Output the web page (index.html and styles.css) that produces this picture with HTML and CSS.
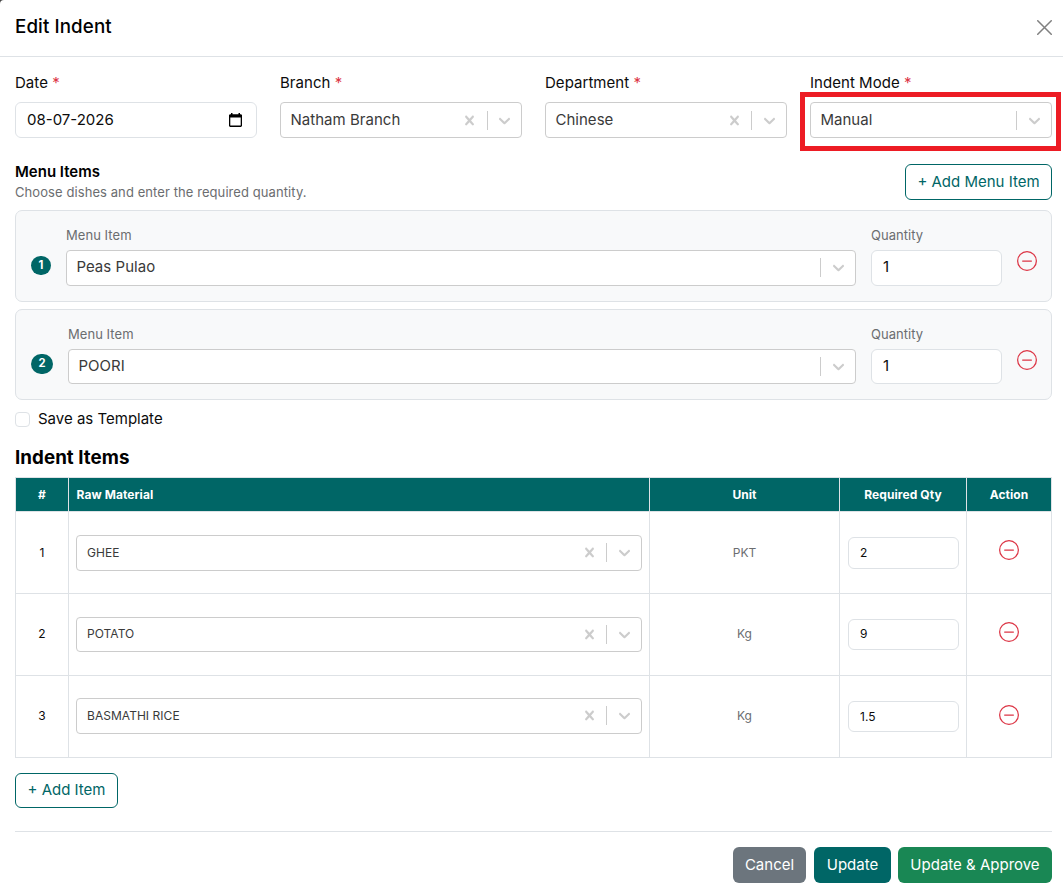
FILE: index.html
```
<!DOCTYPE html>
<html lang="en">
<head>
<meta charset="utf-8">
<title>Edit Indent</title>
<link rel="stylesheet" href="styles.css">
</head>
<body>
<svg class="sprite" aria-hidden="true">
  <symbol id="clear" viewBox="0 0 20 20"><path d="M14.348 14.849c-0.469 0.469-1.229 0.469-1.697 0l-2.651-3.030-2.651 3.029c-0.469 0.469-1.229 0.469-1.697 0-0.469-0.469-0.469-1.229 0-1.697l2.758-3.15-2.759-3.152c-0.469-0.469-0.469-1.228 0-1.697s1.228-0.469 1.697 0l2.652 3.031 2.651-3.031c0.469-0.469 1.228-0.469 1.697 0s0.469 1.229 0 1.697l-2.758 3.152 2.758 3.15c0.469 0.469 0.469 1.229 0 1.698z"/></symbol>
  <symbol id="chevron" viewBox="0 0 20 20"><path d="M4.516 7.548c0.436-0.446 1.043-0.481 1.576 0l3.908 3.747 3.908-3.747c0.533-0.481 1.141-0.446 1.574 0 0.436 0.445 0.408 1.197 0 1.615-0.406 0.418-4.695 4.502-4.695 4.502-0.217 0.223-0.502 0.335-0.787 0.335s-0.57-0.112-0.789-0.335c0 0-4.287-4.084-4.695-4.502s-0.436-1.17 0-1.615z"/></symbol>
  <symbol id="minus" viewBox="0 0 16 16"><path d="M8 15A7 7 0 1 1 8 1a7 7 0 0 1 0 14m0 1A8 8 0 1 0 8 0a8 8 0 0 0 0 16"/><path d="M4 8a.5.5 0 0 1 .5-.5h7a.5.5 0 0 1 0 1h-7A.5.5 0 0 1 4 8"/></symbol>
</svg>
<main class="modal">
  <header class="modal-header">
    <h1>Edit Indent</h1>
    <svg class="close" viewBox="0 0 16 16"><path d="M.8.8 15.2 15.2M15.2.8.8 15.2"/></svg>
  </header>

  <section class="filters">
    <div class="field">
      <label>Date <b>*</b></label>
      <div class="input date"><span>08-07-2026</span>
        <svg viewBox="0 0 13 14"><path d="M2 0h1.5v1.3h6V0H11v1.3h.7c.7 0 1.3.6 1.3 1.3v10c0 .7-.6 1.3-1.3 1.3H1.3C.6 13.900 0 13.300 0 12.600v-10c0-.7.6-1.300 1.300-1.300H2zM1.300 4.600v8h10.400v-8z"/></svg>
      </div>
    </div>
    <div class="field">
      <label>Branch <b>*</b></label>
      <div class="select branch"><span>Natham Branch</span><svg class="x"><use href="#clear"/></svg><i></i><svg><use href="#chevron"/></svg></div>
    </div>
    <div class="field">
      <label>Department <b>*</b></label>
      <div class="select"><span>Chinese</span><svg class="x"><use href="#clear"/></svg><i></i><svg><use href="#chevron"/></svg></div>
    </div>
    <div class="field marked">
      <label>Indent Mode <b>*</b></label>
      <div class="select"><span>Manual</span><i></i><svg><use href="#chevron"/></svg></div>
    </div>
  </section>

  <section class="menu-head">
    <div>
      <h2>Menu Items</h2>
      <p>Choose dishes and enter the required quantity.</p>
    </div>
    <button class="btn outline add-menu">+ Add Menu Item</button>
  </section>

  <section class="cards">
    <div class="card">
      <span class="badge">1</span>
      <div class="grow"><label>Menu Item</label>
        <div class="select"><span>Peas Pulao</span><i></i><svg><use href="#chevron"/></svg></div></div>
      <div class="qty"><label>Quantity</label><div class="input">1</div></div>
      <svg class="remove"><use href="#minus"/></svg>
    </div>
    <div class="card short">
      <span class="badge wide">2</span>
      <div class="grow"><label>Menu Item</label>
        <div class="select"><span>POORI</span><i></i><svg><use href="#chevron"/></svg></div></div>
      <div class="qty"><label>Quantity</label><div class="input">1</div></div>
      <svg class="remove"><use href="#minus"/></svg>
    </div>
  </section>

  <div class="template"><span class="check"></span>Save as Template</div>

  <h3>Indent Items</h3>
  <table>
    <colgroup><col class="c-num"><col class="c-mat"><col class="c-unit"><col class="c-qty"><col class="c-act"></colgroup>
    <thead><tr><th>#</th><th class="left">Raw Material</th><th>Unit</th><th>Required Qty</th><th>Action</th></tr></thead>
    <tbody>
      <tr><td>1</td><td><div class="select"><span>GHEE</span><svg class="x"><use href="#clear"/></svg><i></i><svg><use href="#chevron"/></svg></div></td><td class="muted">PKT</td><td><div class="input small">2</div></td><td><svg class="remove"><use href="#minus"/></svg></td></tr>
      <tr class="tight"><td>2</td><td><div class="select"><span>POTATO</span><svg class="x"><use href="#clear"/></svg><i></i><svg><use href="#chevron"/></svg></div></td><td class="muted">Kg</td><td><div class="input small">9</div></td><td><svg class="remove"><use href="#minus"/></svg></td></tr>
      <tr class="raised"><td>3</td><td><div class="select"><span>BASMATHI RICE</span><svg class="x"><use href="#clear"/></svg><i></i><svg><use href="#chevron"/></svg></div></td><td class="muted">Kg</td><td><div class="input small">1.5</div></td><td><svg class="remove"><use href="#minus"/></svg></td></tr>
    </tbody>
  </table>
  <button class="btn outline add-item">+ Add Item</button>

  <footer>
    <button class="btn cancel">Cancel</button>
    <button class="btn update">Update</button>
    <button class="btn approve">Update &amp; Approve</button>
  </footer>
</main>
</body>
</html>
```
FILE: styles.css
```
* { box-sizing: border-box; }
body { margin: 0; background: #444; font: 15px/22px Inter, sans-serif; color: #0c0c0c; }
h1, h2, h3, p { margin: 0; color: #000; }
.sprite { position: absolute; width: 0; height: 0; }
.modal { height: 893px; padding: 0 11px 0 15px; background: #fff; border-top-left-radius: 4px; overflow: hidden; }
.modal-header { display: flex; justify-content: space-between; align-items: center; height: 57px; margin: 0 -11px 0 -15px; padding: 0 11px 3px 15px; border-bottom: 1px solid #dee2e6; }
h1 { font-size: 18.75px; line-height: 28px; font-weight: 500; letter-spacing: .1px; }
.close { width: 15px; height: 15px; margin-top: 2px; stroke: #808080; stroke-width: 1.6; stroke-linecap: round; }

.filters { display: grid; grid-template-columns: repeat(4, 242px); gap: 23px; padding-top: 15px; }
.field { position: relative; }
.field label { display: block; height: 30px; letter-spacing: .04px; }
label b { color: #dc3545; font-weight: 400; }
.marked::after { content: ""; position: absolute; inset: 20px -9px -13px -10px; border: 5px solid #ed1c24; }

.input { display: flex; align-items: center; height: 36px; padding: 0 11px; background: #fff; border: 1px solid #dee2e6; border-radius: 6px; }
.date { justify-content: space-between; padding-right: 14px; }
.date svg { width: 13px; height: 14px; }
.select { display: flex; align-items: center; height: 36px; padding-right: 7px; background: #fff; border: 1px solid #ccc; border-radius: 4px; color: #3a3a3a; text-align: left; }
.select span { flex: 1; padding-left: 9.4px; letter-spacing: .04px; }
.select svg { width: 19px; height: 19px; fill: #ccc; }
.select i { width: 1px; height: 19px; margin-right: 8px; background: #ccc; }
.select .x { margin-right: 7px; }
.branch .x { margin-right: 8px; }
.branch i { margin-right: 7px; }

.btn { height: 36px; padding: 0; border: 1px solid; border-radius: 6px; font: 15px/22px Inter, sans-serif; color: #fff; }
.outline { background: #fff; color: #006666; }
.add-menu { width: 147px; }
.menu-head { display: flex; justify-content: space-between; height: 72px; padding-top: 26px; }
.menu-head h2 { margin-top: -2px; font-size: 15px; line-height: 20px; font-weight: 600; }
.menu-head p { font-size: 13px; line-height: 20px; color: #6b6d70; letter-spacing: .08px; }

.cards { display: grid; gap: 7px; }
.card { display: flex; gap: 15px; height: 92px; padding: 15px 14px 0 15px; background: #f8f9fa; border: 1px solid #dee2e6; border-radius: 7px; }
.card label { display: block; height: 24px; font-size: 13px; line-height: 18px; color: #6b6d70; letter-spacing: .05px; }
.card .select, .card .input { padding-bottom: 2px; }
.card .select i, .card .select svg { margin-top: 1px; }
.short { height: 91px; }
.short .select, .short .input { height: 35px; }
.badge { width: 20px; height: 19px; margin-top: 30px; border-radius: 10px; background: #006666; color: #fff; font-size: 11.25px; line-height: 18px; font-weight: 700; text-align: center; }
.wide { width: 22px; height: 20px; margin-top: 29px; }
.grow { flex: 1; }
.qty { width: 131px; }
.remove { display: block; width: 20px; height: 20px; fill: #dc3545; }
.card .remove { margin-top: 25px; }

.template { display: flex; align-items: center; gap: 8px; height: 22px; margin-top: 8px; }
.check { width: 15px; height: 15px; border: 1px solid #dee2e6; border-radius: 4px; margin-top: 1px; }
h3 { margin-top: 16px; height: 31px; font-size: 18.75px; line-height: 23px; font-weight: 700; letter-spacing: .05px; }

table { width: 1037px; border-collapse: collapse; table-layout: fixed; font-size: 12px; }
.c-num { width: 53px; } .c-mat { width: 581px; } .c-unit { width: 190px; } .c-qty { width: 127px; } .c-act { width: 85px; }
th, td { height: 82px; padding: 0 7px; border: 1px solid #dee2e6; text-align: center; vertical-align: middle; }
th { height: 34px; background: #006666; color: #fff; font-weight: 700; letter-spacing: .08px; }
th.left { text-align: left; padding-left: 7.5px; }
td .select span { padding-left: 10px; }
.muted { color: #6b6d70; }
.small { height: 32px; margin: 0 0 0 1px; }
td .remove { margin: -5px auto 0; }
.tight td, .raised td { padding-bottom: 1px; }
.tight .select { height: 35px; }
.tight .small, .raised .small { height: 31px; }
.raised td { padding-bottom: 2px; }
.raised td:nth-child(4) { padding-bottom: 0; }
.tight .remove { margin-top: -4px; }
.raised .remove { margin-top: -2px; }
.add-item { display: block; width: 103px; height: 35px; margin-top: 15px; padding-bottom: 2px; }

footer { display: flex; justify-content: flex-end; gap: 7px; margin-top: 23px; padding-top: 15px; border-top: 1px solid #dee2e6; }
footer .btn { border: 0; }
.cancel { width: 73px; margin-right: 1px; background: #6c757d; }
.update { width: 77px; background: #006666; }
.approve { width: 154px; background: #198754; }
```
